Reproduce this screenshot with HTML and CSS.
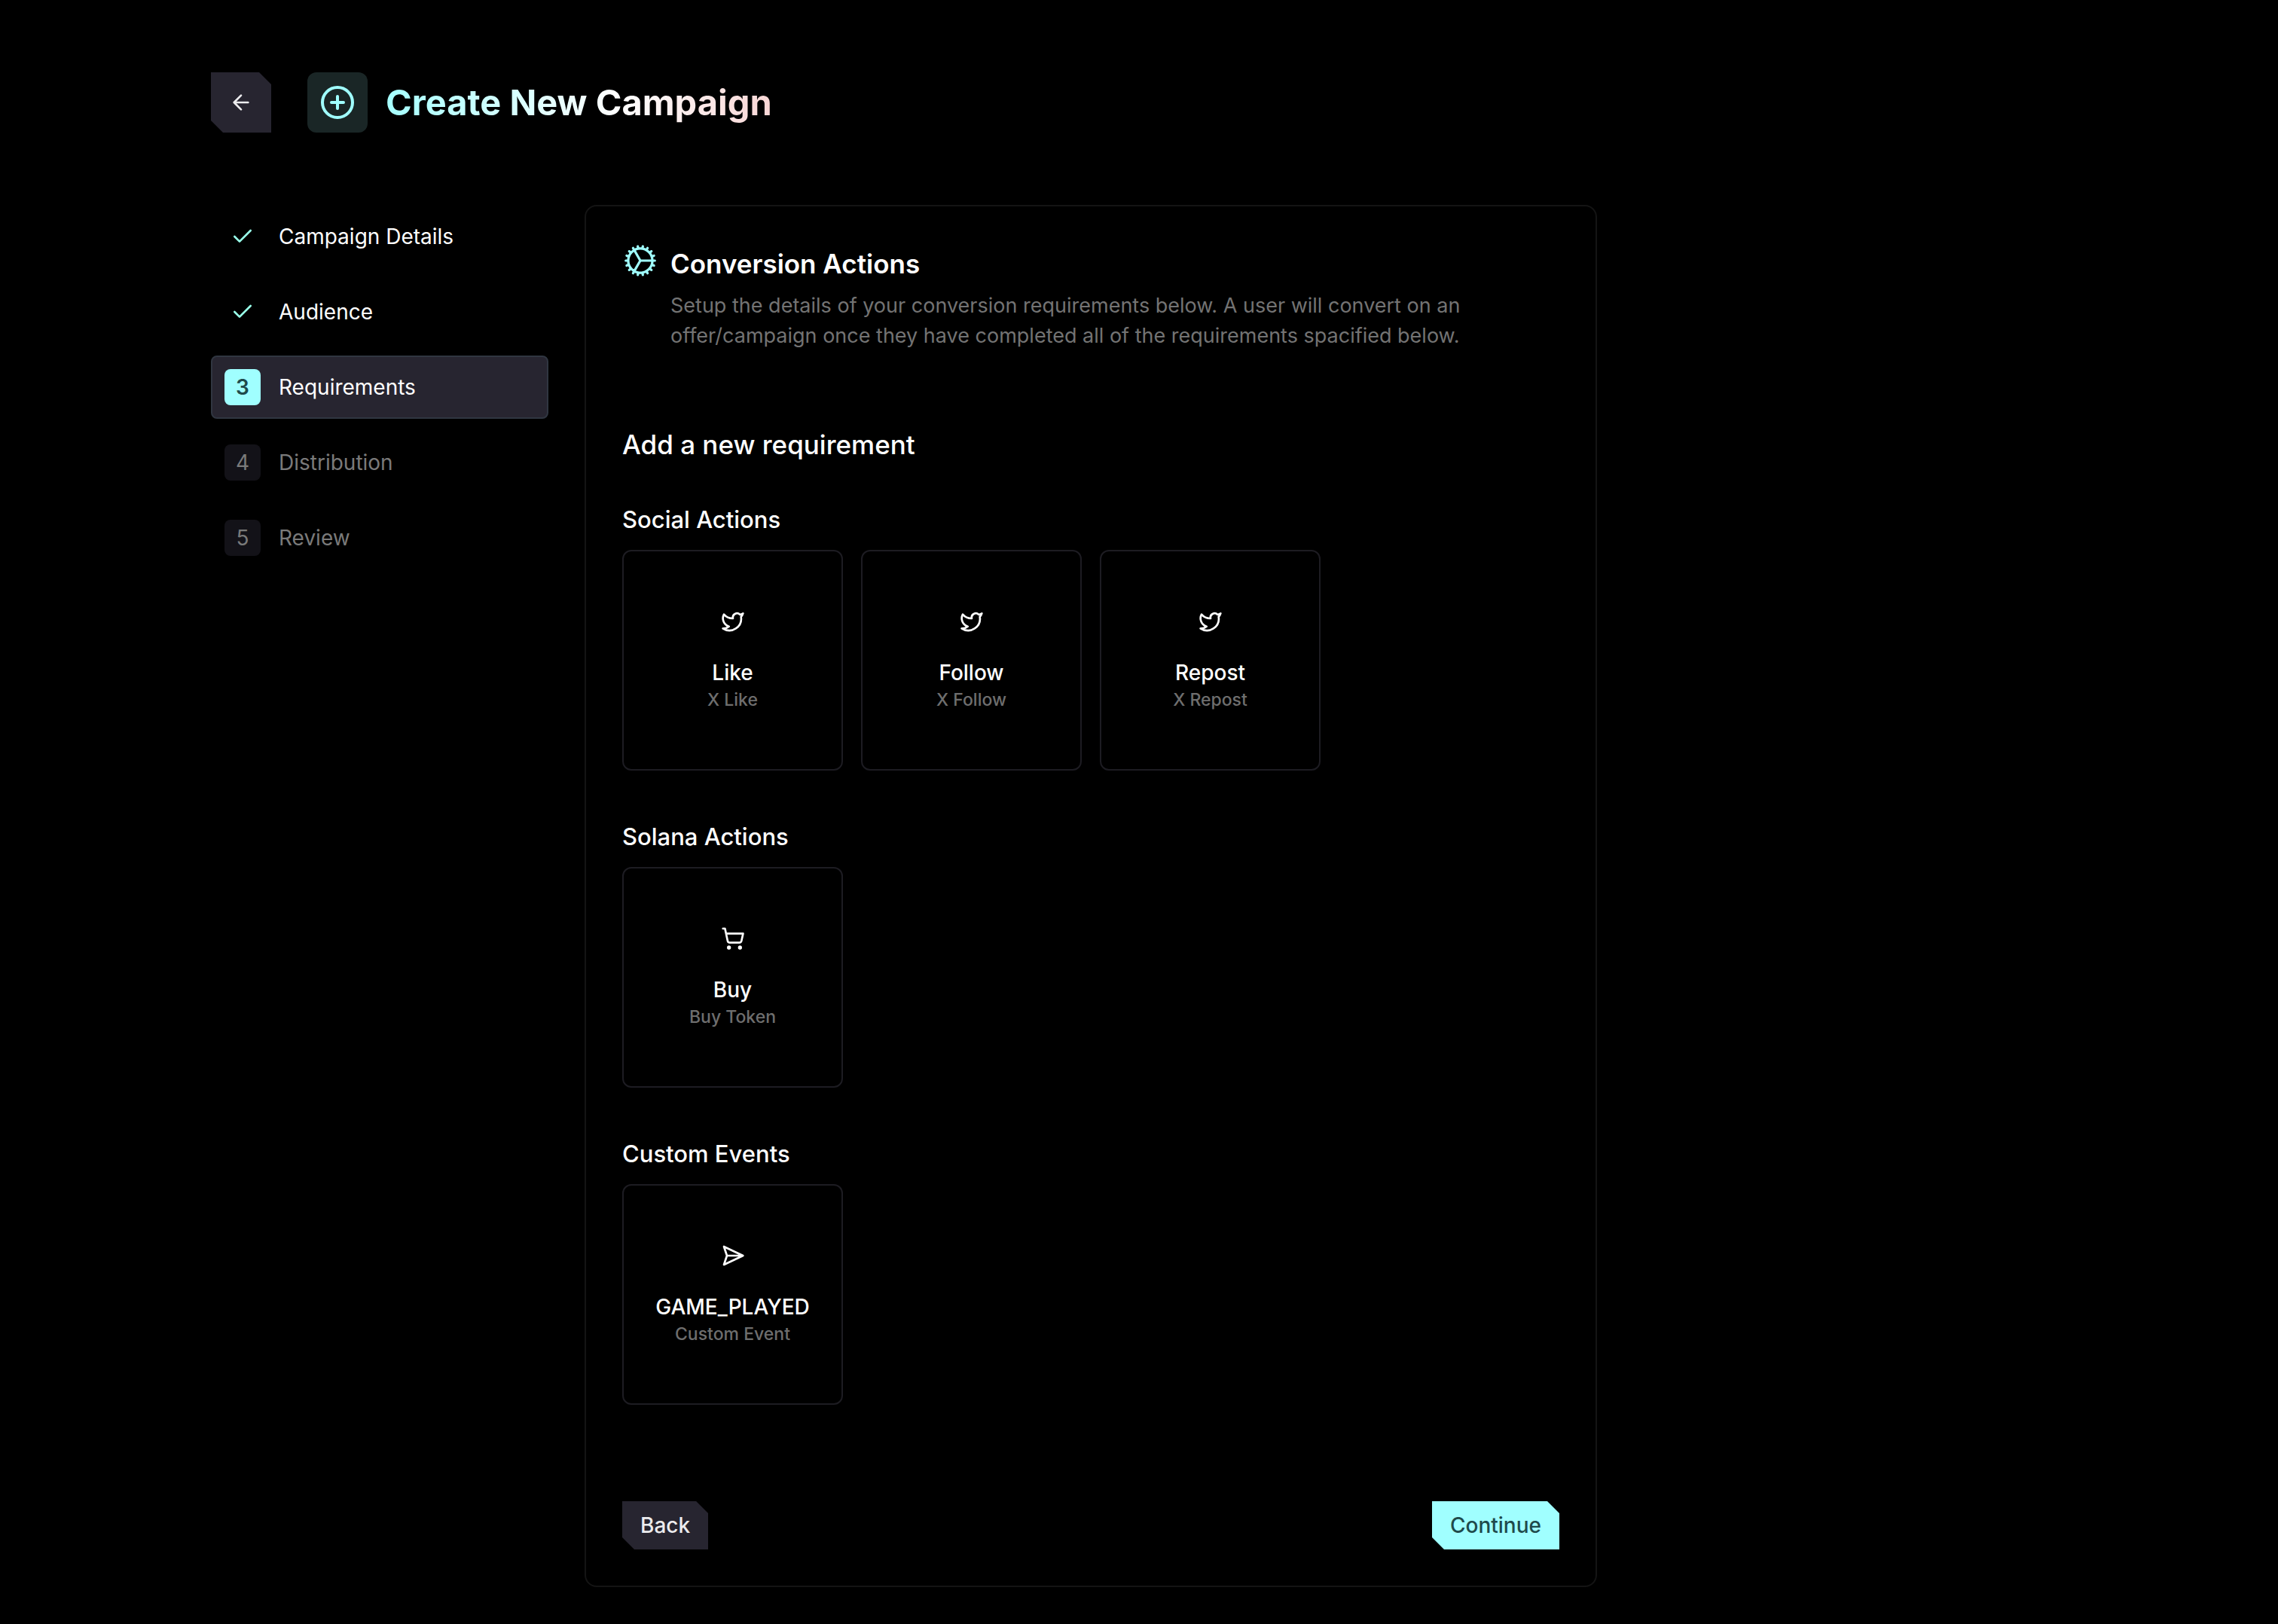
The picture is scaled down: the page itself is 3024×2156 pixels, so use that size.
FILE: index.html
```html
<!DOCTYPE html>
<html lang="en">
<head>
<meta charset="utf-8">
<title>Create New Campaign</title>
<link rel="stylesheet" href="styles.css">
</head>
<body>
<svg class="sprite" aria-hidden="true">
  <symbol id="bird" viewBox="0 0 24 24"><path d="M22 4s-.7 2.100-2 3.400c1.600 10-9.400 17.300-18 11.600 2.200.1 4.400-.6 6-2C3 15.500.5 9.600 3 5c2.200 2.600 5.600 4.100 9 4-.9-4.200 4-6.600 7-3.800 1.100 0 3-1.200 3-1.200z"/></symbol>
  <symbol id="check" viewBox="0 0 24 24"><path d="M20 6 9 17l-5-5"/></symbol>
</svg>
<div class="page">
  <header class="header">
    <button class="cut icon-button" type="button" aria-label="Go back">
      <svg class="icon" viewBox="0 0 24 24"><path d="m12 19-7-7 7-7M19 12H5"/></svg>
    </button>
    <div class="heading">
      <span class="badge"><svg viewBox="0 0 24 24"><circle cx="12" cy="12" r="10"/><path d="M8 12h8M12 8v8"/></svg></span>
      <h1>Create New Campaign</h1>
    </div>
  </header>
  <div class="content">
    <nav class="steps" aria-label="Campaign steps">
      <a class="step" href="#details"><span class="mark"><svg class="icon"><use href="#check"/></svg></span>Campaign Details</a>
      <a class="step" href="#audience"><span class="mark"><svg class="icon"><use href="#check"/></svg></span>Audience</a>
      <a class="step current" href="#requirements" aria-current="step"><span class="mark">3</span>Requirements</a>
      <a class="step later" href="#distribution"><span class="mark">4</span>Distribution</a>
      <a class="step later" href="#review"><span class="mark">5</span>Review</a>
    </nav>
    <main class="panel" id="requirements">
      <div class="intro">
        <svg class="gear" viewBox="0.8 0.8 22.4 22.4"><path d="M4.500 12a7.500 7.500 0 0 0 15 0m-15 0a7.500 7.500 0 1 1 15 0m-15 0H3m16.500 0H21m-1.500 0H12m-8.457 3.077 1.410-.513m14.095-5.130 1.410-.513M5.106 17.785l1.150-.964m11.490-9.642 1.149-.964M7.501 19.795l.750-1.300m7.500-12.990.750-1.300m-6.063 16.658.260-1.477m2.605-14.772.260-1.477m0 17.726-.260-1.477M10.698 4.614l-.260-1.477M16.500 19.794l-.750-1.299M7.500 4.205 12 12m6.894 5.785-1.149-.964M6.256 7.178l-1.150-.964m15.352 8.864-1.410-.513M4.954 9.435l-1.410-.514M12.002 12l-3.750 6.495"/></svg>
        <div>
          <h2>Conversion Actions</h2>
          <p>Setup the details of your conversion requirements below. A user will convert on an<br>offer/campaign once they have completed all of the requirements spacified below.</p>
        </div>
      </div>
      <h3>Add a new requirement</h3>
      <section class="group">
        <h4>Social Actions</h4>
        <div class="cards">
          <button class="card" type="button"><svg class="icon"><use href="#bird"/></svg><span class="name">Like</span><span class="note">X Like</span></button>
          <button class="card" type="button"><svg class="icon"><use href="#bird"/></svg><span class="name">Follow</span><span class="note">X Follow</span></button>
          <button class="card" type="button"><svg class="icon"><use href="#bird"/></svg><span class="name">Repost</span><span class="note">X Repost</span></button>
        </div>
      </section>
      <section class="group">
        <h4>Solana Actions</h4>
        <div class="cards">
          <button class="card" type="button"><svg class="icon" viewBox="0 0 24 24"><circle cx="8" cy="21" r="1"/><circle cx="19" cy="21" r="1"/><path d="M2.050 2.050h2l2.660 12.420a2 2 0 0 0 2 1.580h9.780a2 2 0 0 0 1.950-1.570l1.650-7.430H5.120"/></svg><span class="name">Buy</span><span class="note">Buy Token</span></button>
        </div>
      </section>
      <section class="group">
        <h4>Custom Events</h4>
        <div class="cards">
          <button class="card" type="button"><svg class="icon" viewBox="0 0 24 24"><path d="m3 3 3 9-3 9 19-9ZM6 12h16"/></svg><span class="name">GAME_PLAYED</span><span class="note">Custom Event</span></button>
        </div>
      </section>
      <div class="actions">
        <button class="cut" type="button">Back</button>
        <button class="cut primary" type="button">Continue</button>
      </div>
    </main>
  </div>
</div>
</body>
</html>
```
FILE: styles.css
```css
* { box-sizing: border-box; }

body {
  margin: 0;
  background: #000;
  color: #fff;
  font-family: Inter, "Liberation Sans", sans-serif;
  font-size: 28px;
  line-height: 40px;
}

h1, h2, h3, h4, p { margin: 0; }
button { font: inherit; color: inherit; }
svg { fill: none; stroke: currentColor; stroke-width: 2; stroke-linecap: round; stroke-linejoin: round; }
.sprite { display: none; }

.page {
  max-width: 2400px;
  padding: 96px 280px 48px;
}

.header { display: flex; align-items: center; gap: 48px; }
.heading { display: flex; align-items: center; gap: 24px; }

h1 {
  background: linear-gradient(90deg, #a5ffff, #fff 60%, #f8d6d5);
  background-clip: text;
  color: transparent;
  font-size: 47px;
  font-weight: 700;
  line-height: 64px;
}

.badge {
  display: grid;
  place-items: center;
  width: 80px;
  height: 80px;
  border-radius: 12px;
  background: #1a2626;
  color: #a0ffff;
}
.badge svg { width: 48px; height: 48px; }

.cut {
  border: 0;
  padding: 12px 24px;
  background: #272530;
  color: #ececee;
  clip-path: polygon(0 0, calc(100% - 16px) 0, 100% 16px, 100% 100%, 16px 100%, 0 calc(100% - 16px));
  font-weight: 500;
}
.cut.primary { background: #a0ffff; color: #1f4a4b; }
.cut.icon-button { display: grid; place-items: center; width: 80px; height: 80px; padding: 0; }

.icon { width: 32px; height: 32px; }

.content { display: flex; align-items: flex-start; gap: 48px; margin-top: 96px; }

.steps { display: flex; flex-direction: column; gap: 16px; width: 448px; flex: none; }
.step {
  display: flex;
  align-items: center;
  gap: 24px;
  height: 84px;
  padding: 0 16px;
  border: 2px solid transparent;
  border-radius: 8px;
  color: #fff;
  text-decoration: none;
}
.mark {
  display: grid;
  place-items: center;
  width: 48px;
  height: 48px;
  border-radius: 8px;
}
.mark .icon { color: #99ffea; }
.current { background: #272530; border-color: #303641; }
.current .mark { background: #a0ffff; color: #1f4a4b; font-weight: 600; }
.later { color: #7a7a7a; }
.later .mark { background: #131218; }

.panel {
  flex: 1;
  max-width: 1344px;
  padding: 48px;
  border: 2px solid #141414;
  border-radius: 16px;
}

.intro { display: flex; gap: 16px; }
.intro p { margin-top: 8px; color: #737373; font-size: 27px; }
.gear { width: 48px; height: 48px; flex: none; color: #a0ffff; stroke-width: 1.5; }
h2, h3 { font-size: 35px; line-height: 56px; }
h2 { font-weight: 600; }
h3 { margin-top: 96px; font-weight: 500; }
h4 { font-size: 31px; font-weight: 500; line-height: 48px; }

.group { margin-top: 48px; }
.group + .group { margin-top: 64px; }
.cards { display: flex; gap: 24px; margin-top: 16px; }
.card {
  display: flex;
  flex-direction: column;
  align-items: center;
  justify-content: center;
  width: 293px;
  height: 293px;
  padding: 0;
  border: 2px solid #1d1c22;
  border-radius: 12px;
  background: none;
}
.name { margin-top: 32px; font-weight: 500; }
.note { color: #6e6e6e; font-size: 23px; font-weight: 500; line-height: 32px; }

.actions { display: flex; justify-content: space-between; margin-top: 128px; }
```
